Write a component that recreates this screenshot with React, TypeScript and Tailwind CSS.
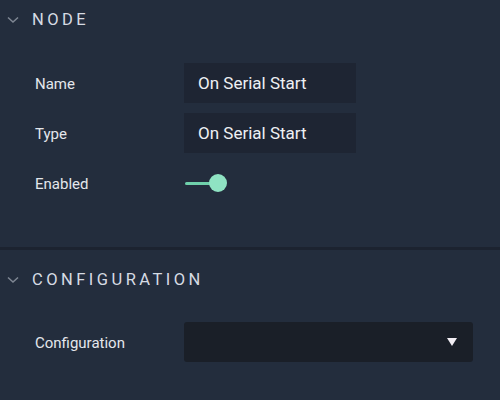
import React from 'react';

const Chevron = () => (
  <svg width="12" height="8" viewBox="0 0 12 8" className="shrink-0">
    <path d="M1 1.5 L6 6 L11 1.5" fill="none" stroke="#7f8794" strokeWidth="1.5" />
  </svg>
);

const SectionHeader = ({ title }: { title: string }) => (
  <div className="flex items-center h-[40px] pl-[7px] gap-[13px]">
    <Chevron />
    <span className="text-[16.5px] tracking-[0.21em] text-[#d6dbe3] uppercase">{title}</span>
  </div>
);

const Row = ({ label, children }: { label: string; children: React.ReactNode }) => (
  <div className="flex items-center h-[40px]">
    <span className="w-[184px] pl-[35px] pt-[2px] text-[15px] text-[#e4e7ec] shrink-0">{label}</span>
    {children}
  </div>
);

export default function App() {
  return (
    <div className="w-[500px] h-[400px] bg-[#232d3d] overflow-hidden" style={{ fontFamily: 'Roboto, "Liberation Sans", sans-serif' }}>
      {/* Node section */}
      <div className="h-[247px]">
        <SectionHeader title="Node" />
        <div className="flex flex-col gap-[10px] pt-[23px]">
          <Row label="Name">
            <div className="w-[172px] h-[40px] bg-[#1e2533] flex items-center pl-[14px] pt-[2px] text-[17px] text-[#eef0f3]">
              On Serial Start
            </div>
          </Row>
          <Row label="Type">
            <div className="w-[172px] h-[40px] bg-[#1e2533] flex items-center pl-[14px] pt-[2px] text-[17px] text-[#eef0f3]">
              On Serial Start
            </div>
          </Row>
          <Row label="Enabled">
            <div className="relative w-[44px] h-[20px] flex items-center">
              <div className="ml-[1px] w-[30px] h-[3px] rounded-full bg-[#6fd0ab]" />
              <div className="absolute left-[25px] top-[1px] w-[18px] h-[18px] rounded-full bg-[#8fe3c3]" />
            </div>
          </Row>
        </div>
      </div>
      <div className="h-[3px] bg-[#1c2330]" />
      {/* Configuration section */}
      <div className="pt-[10px]">
        <SectionHeader title="Configuration" />
        <div className="pt-[22px]">
          <Row label="Configuration">
            <div className="w-[289px] h-[40px] bg-[#1a1f28] rounded-[3px] flex items-center justify-end pr-[16px]">
              <svg width="10" height="8" viewBox="0 0 10 8">
                <path d="M0 0 L10 0 L5 8 Z" fill="#f2eef4" />
              </svg>
            </div>
          </Row>
        </div>
      </div>
    </div>
  );
}
